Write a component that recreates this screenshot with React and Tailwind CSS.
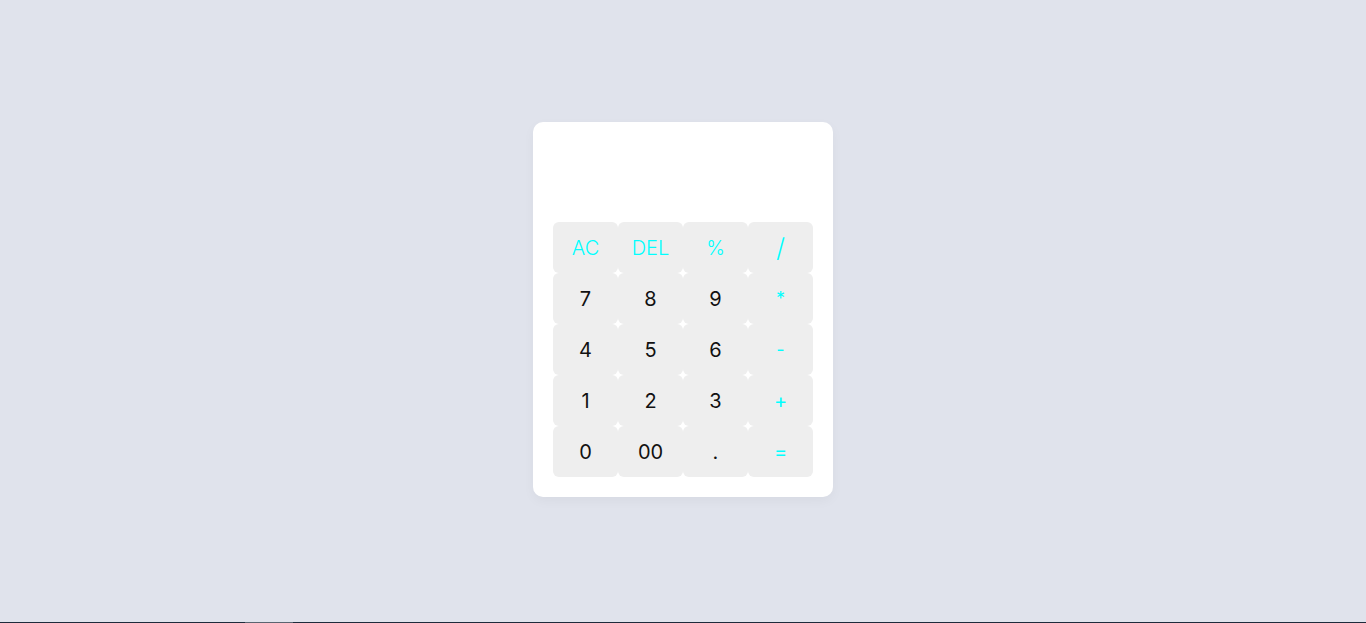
const keys = [
  { label: 'AC', op: true, thin: true },
  { label: 'DEL', op: true, thin: true },
  { label: '%', op: true, thin: true },
  { label: '/', op: true, thin: true },
  { label: '7' },
  { label: '8' },
  { label: '9' },
  { label: '*', op: true, small: true },
  { label: '4' },
  { label: '5' },
  { label: '6' },
  { label: '-', op: true, small: true },
  { label: '1' },
  { label: '2' },
  { label: '3' },
  { label: '+', op: true },
  { label: '0' },
  { label: '00' },
  { label: '.' },
  { label: '=', op: true },
]

export default function App() {
  return (
    <div className="h-[623px] flex flex-col bg-[#e0e3ec]" style={{ fontFamily: '"Inter", "Noto Sans", sans-serif' }}>
      <div className="flex-1 flex items-center justify-center pb-[3px]">
        <div className="w-[300px] bg-white rounded-[10px] shadow-[0_4px_12px_rgba(0,0,0,0.04)] p-5">
          <div className="h-20" />
          <div className="grid grid-cols-4">
            {keys.map((k) => (
              <button
                key={k.label}
                className={`h-[51px] rounded-[6px] bg-[#eeeeee] flex items-center justify-center ${k.op ? 'text-[#00ffff]' : 'text-[#111111]'} ${k.thin ? 'font-light' : 'font-normal'} ${k.label === '/' ? 'text-[26px]' : k.small ? 'text-lg' : 'text-xl'}`}
              >
                {k.label}
              </button>
            ))}
          </div>
        </div>
      </div>
      <div className="h-px bg-[#1e2b3b] flex">
        <div className="ml-[245px] w-[48px] bg-[#5a6470]" />
      </div>
    </div>
  )
}
